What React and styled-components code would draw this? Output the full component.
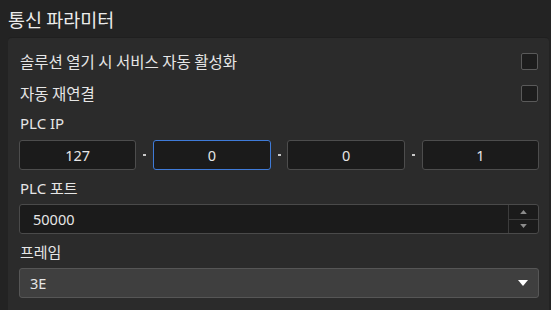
import React from "react";
import styled, { createGlobalStyle } from "styled-components";

const GlobalStyle = createGlobalStyle`
  body {
    margin: 0;
    background: #232323;
    font-family: "Noto Sans", "Noto Sans CJK KR", sans-serif;
    color: #e6e6e6;
    overflow: hidden;
  }
`;

const Page = styled.div`
  width: 551px;
  height: 310px;
  background: #232323;
  display: flex;
  flex-direction: column;
`;

const Title = styled.div`
  height: 37px;
  padding-left: 8px;
  display: flex;
  align-items: center;
  font-size: 18.5px;
  color: #ececec;
  font-family: "Noto Sans CJK KR", sans-serif;
`;

const Panel = styled.div`
  margin-left: 8px;
  width: 541px;
  flex: 1;
  background: #2b2b2b;
  border-top: 1px solid #1f1f1f;
  border-radius: 4px 4px 0 0;
  padding: 7px 10px 0 12px;
  box-sizing: border-box;
  display: flex;
  flex-direction: column;
`;

const CheckRow = styled.label`
  height: 32px;
  display: flex;
  align-items: center;
  justify-content: space-between;
  font-size: 15.5px;
  font-family: "Noto Sans CJK KR", sans-serif;
  padding-right: 1px;
`;

const Box = styled.span`
  width: 15px;
  height: 15px;
  border: 1px solid #5a5a5a;
  border-radius: 2px;
  background: #1d1d1d;
`;

const Fields = styled.div`
  display: flex;
  flex-direction: column;
  gap: 4px;
  margin-top: 1px;
`;

const Field = styled.div`
  display: flex;
  flex-direction: column;
  gap: 4px;
`;

const Label = styled.div`
  height: 26px;
  display: flex;
  align-items: center;
  font-size: 15px;
  font-family: "Noto Sans", "Noto Sans CJK KR", sans-serif;
`;

const IpRow = styled.div`
  display: flex;
  align-items: center;
  margin-left: -1px;
`;

const Octet = styled.div`
  width: 118px;
  height: 30px;
  box-sizing: border-box;
  border: 1px solid ${(p) => (p.$focused ? "#3f7bd8" : "#4d4d4d")};
  border-radius: 3px;
  background: #1b1b1b;
  display: flex;
  align-items: center;
  justify-content: center;
  font-size: 14.5px;
`;

const Dot = styled.span`
  width: 17px;
  display: flex;
  justify-content: center;
  &::before {
    content: "";
    width: 3px;
    height: 2px;
    background: #c8c8c8;
  }
`;

const NumberBox = styled.div`
  height: 30px;
  margin-left: -1px;
  box-sizing: border-box;
  border: 1px solid #4a4a4a;
  border-radius: 3px;
  background: #1b1b1b;
  display: flex;
`;

const NumberText = styled.div`
  flex: 1;
  display: flex;
  align-items: center;
  padding-left: 13px;
  font-size: 14.5px;
`;

const Spinner = styled.div`
  width: 29px;
  border-left: 1px solid #3c3c3c;
  display: flex;
  flex-direction: column;
`;

const SpinButton = styled.div`
  flex: 1;
  display: flex;
  align-items: center;
  justify-content: center;
  border-top: ${(p) => (p.$bottom ? "1px solid #3c3c3c" : "none")};
`;

const SelectBox = styled.div`
  height: 30px;
  margin-left: -1px;
  box-sizing: border-box;
  border: 1px solid #565656;
  border-radius: 3px;
  background: #3f3f3f;
  display: flex;
  align-items: center;
  justify-content: space-between;
  padding: 0 10px 0 10px;
  font-size: 14.5px;
`;

const Tri = ({ up, color, w, h }) => (
  <svg width={w} height={h} viewBox="0 0 10 6">
    <polygon points={up ? "0,6 5,0 10,6" : "0,0 10,0 5,6"} fill={color} />
  </svg>
);

export default function App() {
  return (
    <Page>
      <GlobalStyle />
      <Title>통신 파라미터</Title>
      <Panel>
        <CheckRow>
          솔루션 열기 시 서비스 자동 활성화
          <Box />
        </CheckRow>
        <CheckRow>
          자동 재연결
          <Box />
        </CheckRow>
        <Fields>
          <Field>
            <Label>PLC IP</Label>
            <IpRow>
              <Octet>127</Octet>
              <Dot />
              <Octet $focused>0</Octet>
              <Dot />
              <Octet>0</Octet>
              <Dot />
              <Octet>1</Octet>
            </IpRow>
          </Field>
          <Field>
            <Label>PLC 포트</Label>
            <NumberBox>
              <NumberText>50000</NumberText>
              <Spinner>
                <SpinButton>
                  <Tri up color="#8c8c8c" w={7} h={4} />
                </SpinButton>
                <SpinButton $bottom>
                  <Tri color="#8c8c8c" w={7} h={4} />
                </SpinButton>
              </Spinner>
            </NumberBox>
          </Field>
          <Field>
            <Label>프레임</Label>
            <SelectBox>
              3E
              <Tri color="#ffffff" w={10} h={6} />
            </SelectBox>
          </Field>
        </Fields>
      </Panel>
    </Page>
  );
}
